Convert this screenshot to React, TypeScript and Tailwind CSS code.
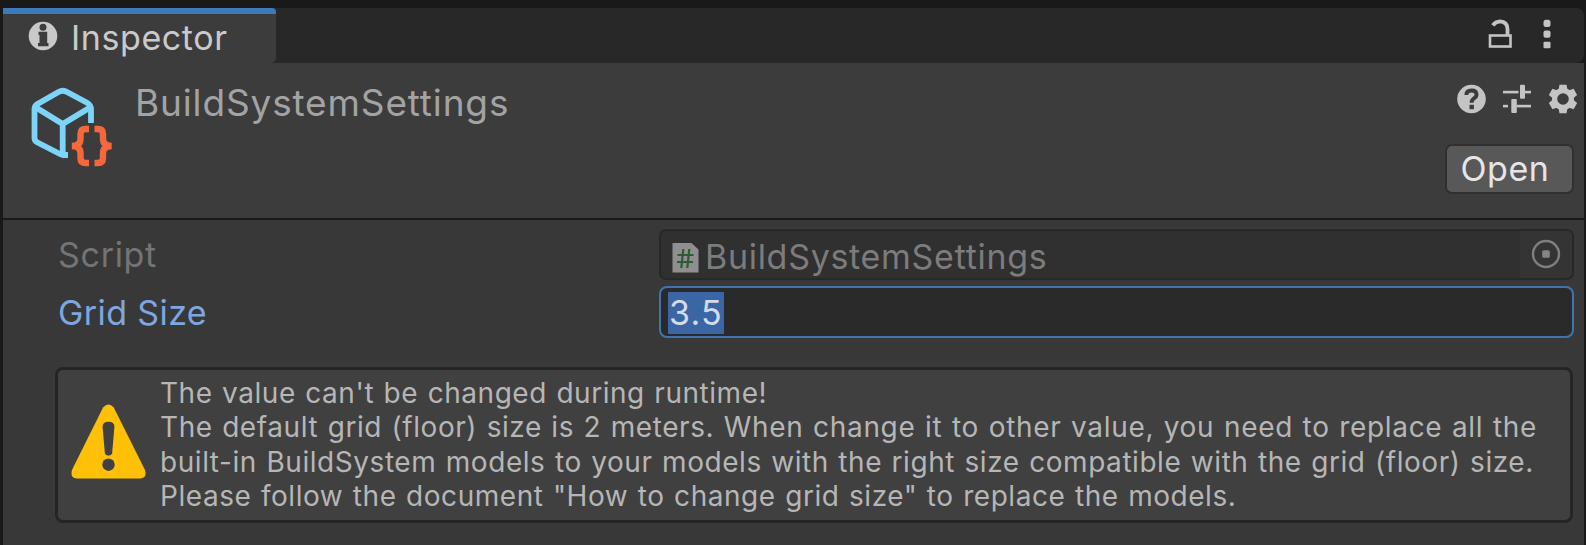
import type { ReactNode } from "react";

function Line({ children, className }: { children: ReactNode; className: string }) {
  return <div className={`whitespace-pre ${className}`}>{children}</div>;
}

function InfoIcon() {
  return (
    <svg className="block h-[30px] w-[30px] shrink-0" viewBox="0 0 30 30">
      <circle cx="15" cy="15" r="14.3" fill="#c9c9c9" />
      <circle cx="15" cy="6.300" r="3.500" fill="#3c3c3c" />
      <path d="M10.500 10.800h8.700v11.200h1.300v3.200h-10.500v-3.200h1.500v-8h-1z" fill="#3c3c3c" />
    </svg>
  );
}

function AssetIcon() {
  return (
    <svg className="block h-[80px] w-[82px] shrink-0" viewBox="0 0 82 80" fill="none">
      <g stroke="#7dd3f8" strokeWidth="5.800" strokeLinejoin="round">
        <path d="M38 68 H33 L30 67 L7.500 55.500 Q4.500 54 4.500 51 V22 Q4.500 19 7.500 17 L28.500 5 Q33 2.500 37 5 L57.500 16 Q61 18.500 61 22 V36" />
        <path d="M6 20.500 L32.700 37 L60 20.500 M32.700 37 V68" />
      </g>
      <g stroke="#f4683c" strokeWidth="6.400">
        <path d="M59 42 H55.500 Q50.500 42 50.500 47 V52 Q50.500 58.500 42 59 Q50.500 59.500 50.500 66 V71 Q50.500 76 55.500 76 H59" />
        <path d="M64.500 42 H68 Q73 42 73 47 V52 Q73 58.500 81.500 59 Q73 59.500 73 66 V71 Q73 76 68 76 H64.500" />
      </g>
    </svg>
  );
}

function LockIcon() {
  return (
    <svg className="block h-[30px] w-[24px]" viewBox="0 0 24 30" fill="none" stroke="#c4c4c4">
      <rect x="2" y="16.500" width="20.500" height="11" strokeWidth="2.600" />
      <path d="M4.800 6.300 Q7.500 2.500 12 2.300 Q19.500 2.800 19.500 10 V16" strokeWidth="3.800" />
    </svg>
  );
}

function DotsIcon() {
  return (
    <svg className="block h-[30px] w-[8px]" viewBox="0 0 8 30" fill="#c4c4c4">
      <rect x="0.500" y="0.700" width="7" height="7.300" rx="2.500" />
      <rect x="0.500" y="11.500" width="7" height="7.300" rx="2" />
      <rect x="0.500" y="22.800" width="7" height="6.500" rx="1" />
    </svg>
  );
}

function HelpIcon() {
  return (
    <svg className="block h-[30px] w-[30px]" viewBox="0 0 30 30" fill="none">
      <circle cx="15.500" cy="15" r="14.300" fill="#c4c4c4" />
      <path d="M10.300 11 Q10.500 6.500 15.500 6.500 Q20.500 6.500 20.500 10.500 Q20.500 13 17.800 14.500 Q15.600 16 15.600 18.800" stroke="#3c3c3c" strokeWidth="3.900" />
      <rect x="13.500" y="20.800" width="4.400" height="4.400" fill="#3c3c3c" />
    </svg>
  );
}

function PresetIcon() {
  return (
    <svg className="block h-[30px] w-[30px]" viewBox="0 0 30 30" fill="#c4c4c4">
      <rect x="1" y="6.800" width="15.500" height="2.600" />
      <rect x="18" y="0.800" width="5" height="14" rx="1" />
      <rect x="22.500" y="6.800" width="6.500" height="2.600" />
      <rect x="1" y="20.800" width="5" height="2.600" />
      <rect x="9.300" y="15" width="5.500" height="14" rx="1" />
      <rect x="14.500" y="20.800" width="14.500" height="2.600" />
    </svg>
  );
}

function GearIcon() {
  return (
    <svg className="block h-[30px] w-[30px]" viewBox="0 0 30 30" fill="none">
      <circle cx="15" cy="15" r="8.400" stroke="#c4c4c4" strokeWidth="5.200" />
      <g fill="#c4c4c4">
        {[0, 60, 120, 180, 240, 300].map((angle) => (
          <path key={angle} d="M11.500 0.700h7l1 5.300h-9z" transform={`rotate(${angle} 15 15)`} />
        ))}
      </g>
    </svg>
  );
}

function ScriptIcon() {
  return (
    <svg className="block h-[31px] w-[27px] shrink-0" viewBox="0 0 27 31">
      <path d="M0.500 0H19.500L26.500 6.500V29.500H0.500Z" fill="#8f8f8f" />
      <path d="M11.300 6L9.300 25M17.300 6L15.300 25M5.500 12H21.500M5 19H21" stroke="#2f5a33" strokeWidth="2.200" />
    </svg>
  );
}

function PickerIcon() {
  return (
    <svg className="block h-[30px] w-[30px]" viewBox="0 0 30 30">
      <circle cx="15" cy="15" r="13" fill="none" stroke="#7f7f7f" strokeWidth="2.400" />
      <rect x="11.200" y="11.200" width="7.600" height="7.600" rx="1.500" fill="#858585" />
    </svg>
  );
}

function WarningIcon() {
  return (
    <svg className="block h-[75px] w-[75px] shrink-0" viewBox="0 0 76 76">
      <path d="M32.500 3.500Q38 -2.500 43.300 3.500L75 67Q77 75 70.500 75.500H5.500Q-1 75 1 67Z" fill="#ffc107" />
      <path d="M32 23Q32 18 38 18T44 23L41.700 50Q41 52.500 38 52.500T34.300 50Z" fill="#404040" />
      <circle cx="38" cy="61.500" r="6.300" fill="#404040" />
    </svg>
  );
}

export default function App() {
  return (
    <div className="flex h-[545px] w-[1586px] flex-col overflow-hidden bg-[#191919] pl-[3px] pr-[2px] pt-[8px] font-['Inter',sans-serif]">
      <div className="flex h-[55px] shrink-0 rounded-r-[8px] bg-[#282828]">
        <div className="flex h-[55px] w-[273px] items-start rounded-br-[5px] rounded-tr-[4px] border-t-[6px] border-[#3d7abb] bg-[#3c3c3c] pl-[25px] pt-[7px]">
          <InfoIcon />
          <Line className="ml-[13px] mt-[-4px] text-[34px] leading-[42px] tracking-[0.6px] text-[#cacaca]">Inspector</Line>
        </div>
        <div className="ml-auto flex pr-[33px] pt-[11px]">
          <LockIcon />
          <div className="w-[31px]" />
          <DotsIcon />
        </div>
      </div>

      <div className="flex h-[157px] shrink-0 border-b-[2px] border-[#1a1a1a] bg-[#3c3c3c]">
        <div className="pl-[27px] pt-[24px]"><AssetIcon /></div>
        <Line className="ml-[23px] mt-[17px] text-[37px] leading-[46px] tracking-[0.85px] text-[#a3a3a3]">BuildSystemSettings</Line>
        <div className="ml-auto flex flex-col items-end">
          <div className="flex gap-[16px] pr-[6px] pt-[21px]">
            <HelpIcon /><PresetIcon /><GearIcon />
          </div>
          <button className="mr-[10px] mt-[30px] flex h-[50px] w-[129px] justify-center rounded-[7px] border-[2px] border-[#303030] bg-[#585858]">
            <Line className="mr-[9px] text-[34px] leading-[46px] tracking-[0.6px] text-[#e6e6e6]">Open</Line>
          </button>
        </div>
      </div>

      <div className="flex min-h-0 flex-1 flex-col bg-[#383838] pl-[52px] pr-[10px] pt-[9px]">
        <div className="flex h-[52px] shrink-0">
          <Line className="w-[604px] pl-[3px] pt-[5px] text-[34px] leading-[42px] tracking-[0.7px] text-[#747474]">Script</Line>
          <div className="flex h-[51px] flex-1 overflow-hidden rounded-[7px] border-[2px] border-[#282828] bg-[#303030]">
            <div className="pl-[11px] pt-[12px]"><ScriptIcon /></div>
            <Line className="ml-[6px] mt-[5px] text-[34px] leading-[42px] tracking-[0.7px] text-[#7c7c7c]">BuildSystemSettings</Line>
            <div className="ml-auto flex w-[52px] bg-[#343434] pl-[11px] pt-[8px]"><PickerIcon /></div>
          </div>
        </div>
        <div className="mt-[5px] flex h-[53px] shrink-0">
          <Line className="w-[604px] pl-[3px] pt-[6px] text-[34px] leading-[42px] tracking-[0.4px] text-[#7ea6e0]">Grid Size</Line>
          <div className="flex h-[52px] flex-1 rounded-[8px] border-[2px] border-[#3f74ae] bg-[#2a2a2a] pl-[7px] pt-[4px]">
            <Line className="h-[42px] w-[56px] bg-[#3a66a6] pl-[1px] text-[34px] leading-[41px] tracking-[1.2px] text-[#d3dcea]">3.5</Line>
          </div>
        </div>
        <div className="mr-[1px] mt-[28px] flex h-[156px] shrink-0 rounded-[8px] border-[3px] border-[#252525] bg-[#404040]">
          <div className="pl-[13px] pt-[34px]"><WarningIcon /></div>
          <div className="ml-[14px] mt-[6px] text-[28px] leading-[34.4px] text-[#b6b6b6] [word-spacing:1.1px]">
            <Line className="tracking-[0.54px]">The value can't be changed during runtime!</Line>
            <Line className="tracking-[0.67px]"><span className="tracking-[0.56px]">The default grid (floor) size is 2 meters.</span> When change it to other value, you need to replace all the</Line>
            <Line className="tracking-[0.55px]">built-in BuildSystem models to your models with the right size compatible with the grid (floor) size.</Line>
            <Line className="tracking-[0.55px]">Please follow the document "How to change grid size" to replace the models.</Line>
          </div>
        </div>
      </div>
    </div>
  );
}
